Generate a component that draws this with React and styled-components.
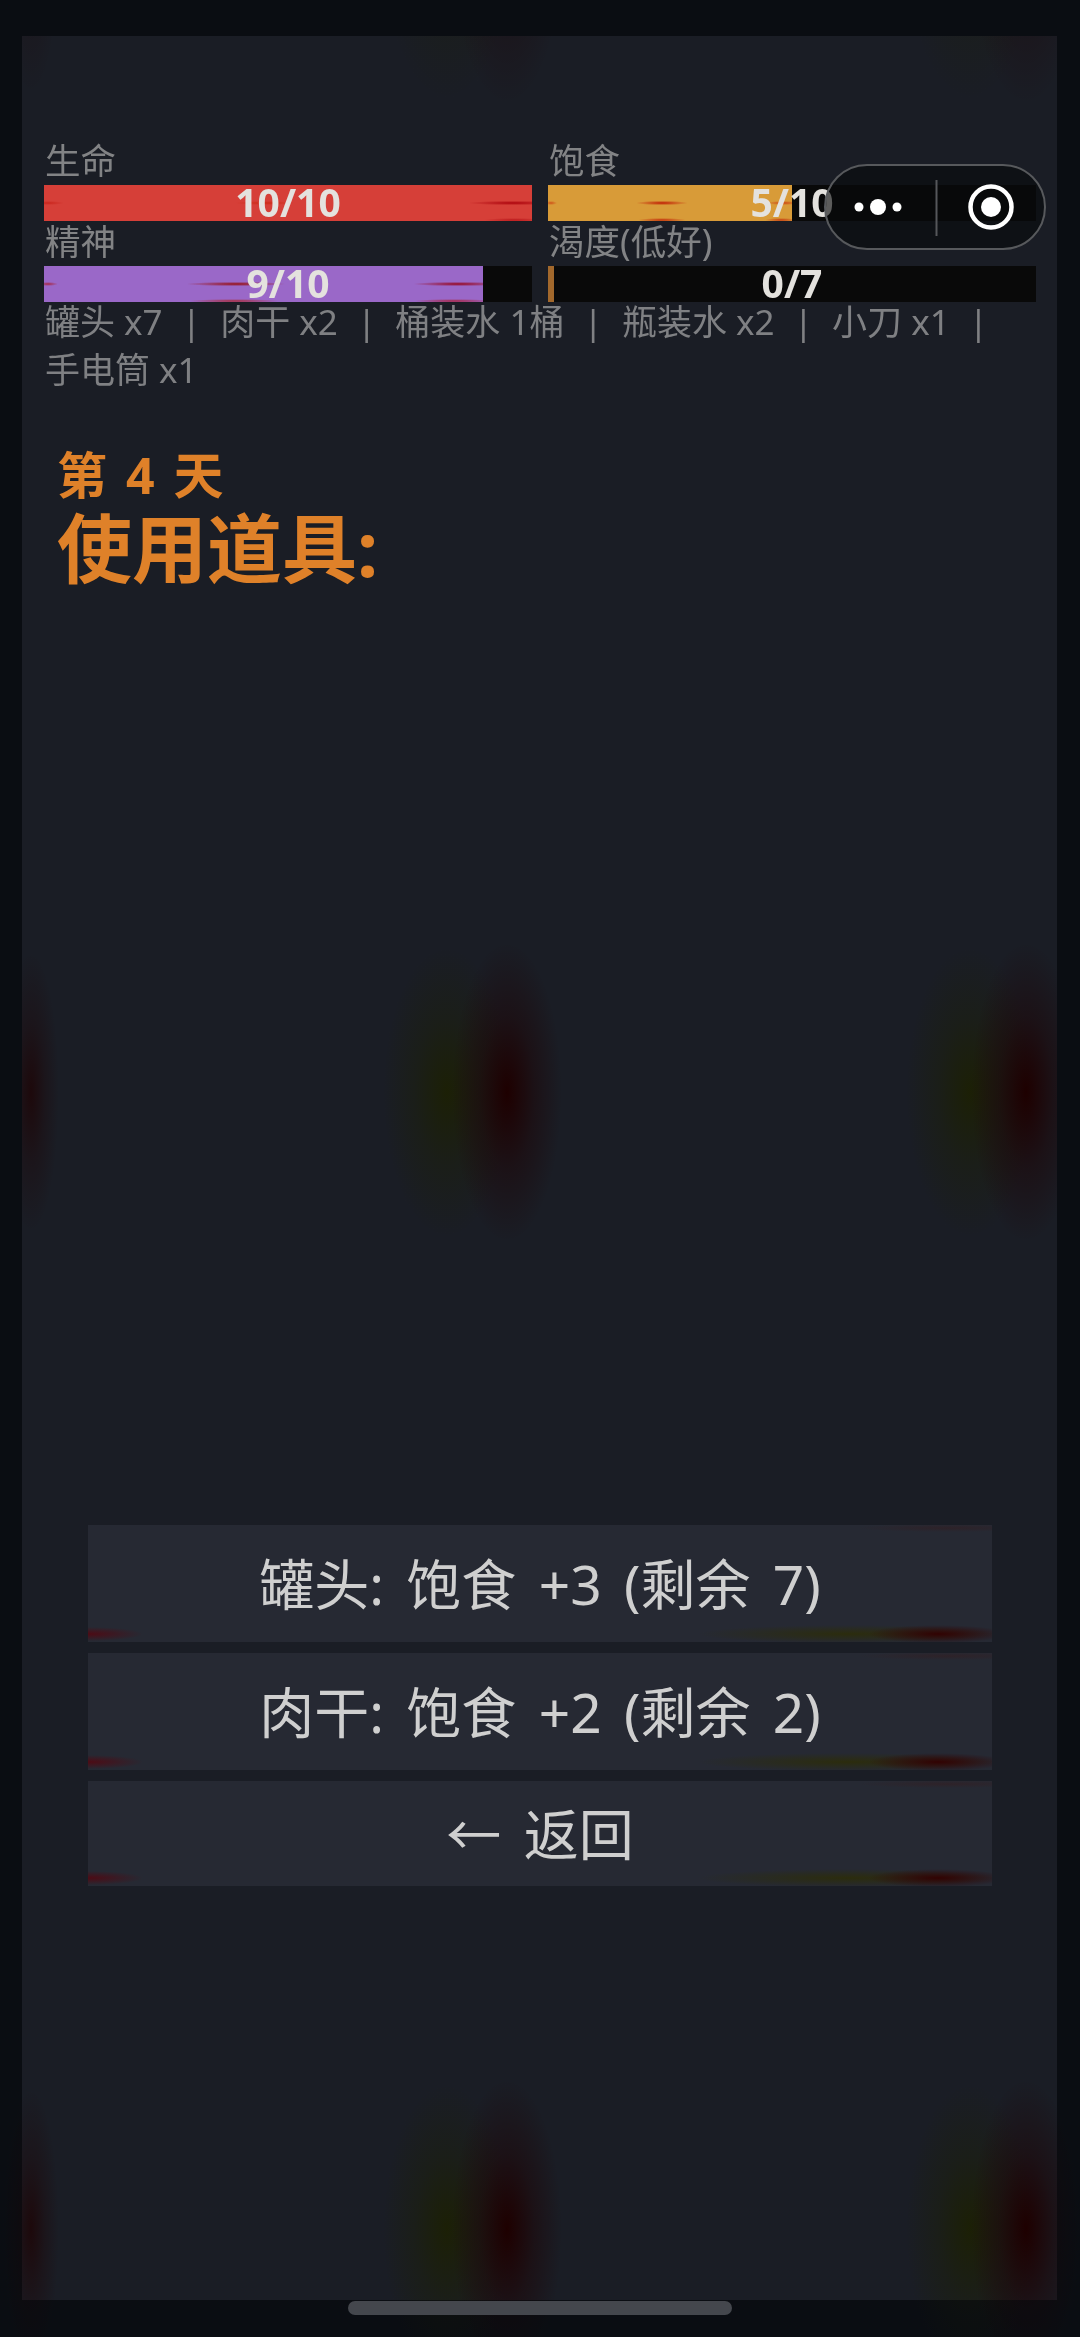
import React from "react";
import styled, { createGlobalStyle } from "styled-components";

const FONT = `"Noto Sans", "Noto Sans CJK SC", sans-serif`;

const blob = (x, y, rx, ry, rgb, a) =>
  `radial-gradient(ellipse ${rx}px ${ry}px at ${x}px ${y}px, rgba(${rgb},${a}) 0%, rgba(${rgb},${a * 0.4}) 50%, rgba(${rgb},0) 100%)`;

const blobRow = (ox, oy, a) =>
  [
    blob(485 + ox, oy, 55, 150, "30,0,0", a),
    blob(425 + ox, oy, 64, 145, "28,32,0", a * 0.85),
    blob(1004 + ox, oy, 55, 150, "30,0,0", a),
    blob(948 + ox, oy, 64, 145, "28,32,0", a * 0.85),
    blob(9 + ox, oy, 28, 140, "30,0,0", a * 0.7),
  ].join(",");

const Global = createGlobalStyle`
  html, body { margin: 0; padding: 0; background: #0a0d12; }
  body { font-family: ${FONT}; }
`;

const Screen = styled.div`
  position: relative;
  width: 1080px;
  height: 2337px;
  overflow: hidden;
  box-sizing: border-box;
  padding: 36px 23px 37px 22px;
  background: ${blobRow(22, 2229, 0.5)}, #0a0d12;
`;

const Panel = styled.main`
  height: 100%;
  box-sizing: border-box;
  padding: 104px 21px 0 22px;
  display: flex;
  flex-direction: column;
  background: ${blobRow(0, -81, 0.55)}, ${blobRow(0, 1056, 1)}, ${blobRow(0, 2193, 1)}, #1a1d25;
`;

const Stats = styled.section`
  display: grid;
  grid-template-columns: 488px 488px;
  column-gap: 16px;
`;

const Stat = styled.div`
  display: flex;
  flex-direction: column;
`;

const StatLabel = styled.div`
  height: 45px;
  padding-left: 1px;
  font-size: 35.5px;
  line-height: 40px;
  color: #828385;
  filter: blur(0.6px);
`;

const Bar = styled.div`
  display: grid;
  height: 36px;
  background: #090909;
`;

const BarFill = styled.div`
  grid-area: 1 / 1;
  height: 36px;
  background: ${(p) => p.$streaks}, ${(p) => p.$color};
`;

const BarValue = styled.div`
  grid-area: 1 / 1;
  text-align: center;
  font-size: 39px;
  font-weight: 700;
  line-height: 33px;
  color: #e4e2de;
  filter: blur(0.6px);
`;

const Inventory = styled.p`
  margin: -4px 0 0;
  padding-left: 1px;
  font-size: 35px;
  line-height: 48px;
  color: #7f8083;
  filter: blur(0.6px);
`;

const Sep = styled.span`
  margin: 0 10px;
`;

const Heading = styled.header`
  margin: 50px 0 0 13px;
  color: #df8129;
  font-weight: 700;
  filter: blur(0.5px);
`;

const Day = styled.div`
  font-size: 50px;
  line-height: 62px;
  word-spacing: 6px;
`;

const Title = styled.h1`
  margin: 0;
  font-size: 75px;
  line-height: 84px;
  font-weight: 700;
`;

const Actions = styled.nav`
  margin-top: auto;
  margin-bottom: 414px;
  margin-left: 44px;
  margin-right: 44px;
  display: flex;
  flex-direction: column;
  gap: 11.5px;
`;

const ActionButton = styled.button`
  display: flex;
  align-items: center;
  justify-content: center;
  height: ${(p) => (p.$short ? 105 : 116.5)}px;
  padding: 0 0 5px;
  border: 0;
  font-family: ${FONT};
  font-size: 55px;
  word-spacing: 8px;
  color: #cfcfcf;
  background:
    radial-gradient(ellipse 55px 7px at 0px calc(100% - 8px), rgba(90, 0, 10, 0.75), rgba(90, 0, 10, 0)),
    radial-gradient(ellipse 70px 9px at 850px calc(100% - 8px), rgba(50, 0, 0, 0.95), rgba(50, 0, 0, 0)),
    radial-gradient(ellipse 150px 9px at 760px calc(100% - 8px), rgba(45, 45, 0, 0.75), rgba(45, 45, 0, 0)),
    radial-gradient(ellipse 90px 4px at 860px 3px, rgba(60, 20, 20, 0.35), rgba(60, 20, 20, 0)),
    #262933;
`;

const ButtonLabel = styled.span`
  filter: blur(0.5px);
`;

const Capsule = styled.div`
  position: absolute;
  left: 824px;
  top: 164px;
  width: 222px;
  height: 86px;
  box-sizing: border-box;
  border: 2px solid #57595c;
  border-radius: 43px;
  background: rgba(8, 9, 11, 0.62);
  display: flex;
  align-items: center;
`;

const CapsuleIcon = styled.svg`
  display: block;
`;

const HomeBar = styled.div`
  position: absolute;
  left: 348px;
  top: 2301px;
  width: 384px;
  height: 14px;
  border-radius: 7px;
  background: #44474d;
`;

const streak = (x, y, rx, ry, rgb, a) =>
  `radial-gradient(ellipse ${rx}px ${ry}px at ${x}px ${y}px, rgba(${rgb},${a}), rgba(${rgb},0))`;

const stats = [
  { label: "生命", value: "10/10", pct: 100, color: "#d63f38",
    streaks: [streak(469, 18, 45, 2.2, "170,0,10", 0.95), streak(221, 18, 30, 2, "200,30,0", 0.6), streak(4, 18, 16, 2, "190,10,0", 0.5), streak(470, 35, 30, 2, "170,0,10", 0.6)].join(",") },
  { label: "饱食", value: "5/10", pct: 50, color: "#d89b38",
    streaks: [streak(114, 18, 26, 2.2, "190,20,0", 0.95), streak(114, 35, 24, 2, "190,20,0", 0.8), streak(235, 18, 16, 2, "200,30,0", 0.7), streak(233, 35, 16, 2, "190,20,0", 0.7), streak(3, 18, 6, 2, "200,30,0", 0.6)].join(",") },
  { label: "精神", value: "9/10", pct: 90, color: "#9a68c8",
    streaks: [streak(192, 18, 50, 2.2, "150,10,10", 0.95), streak(414, 18, 45, 2.2, "150,0,20", 0.95), streak(4, 18, 10, 2, "170,10,10", 0.7), streak(190, 35, 45, 2, "170,20,0", 0.7), streak(410, 35, 40, 2, "170,10,10", 0.7)].join(",") },
  { label: "渴度(低好)", value: "0/7", pct: 1.2, color: "#a2682c", streaks: "none" },
];

const items = ["罐头 x7", "肉干 x2", "桶装水 1桶", "瓶装水 x2", "小刀 x1", "手电筒 x1"];

export default function App() {
  return (
    <>
      <Global />
      <Screen>
        <Panel>
          <Stats>
            {stats.map((s) => (
              <Stat key={s.label}>
                <StatLabel>{s.label}</StatLabel>
                <Bar>
                  <BarFill $color={s.color} $streaks={s.streaks} style={{ width: `${s.pct}%` }} />
                  <BarValue>{s.value}</BarValue>
                </Bar>
              </Stat>
            ))}
          </Stats>
          <Inventory>
            {items.map((it, i) => (
              <React.Fragment key={it}>
                {it}
                {i < items.length - 1 ? (
                  <>
                    {" "}<Sep>|</Sep>{" "}
                  </>
                ) : null}
              </React.Fragment>
            ))}
          </Inventory>
          <Heading>
            <Day>第 4 天</Day>
            <Title>使用道具:</Title>
          </Heading>
          <Actions>
            <ActionButton><ButtonLabel>罐头: 饱食 +3 (剩余 7)</ButtonLabel></ActionButton>
            <ActionButton><ButtonLabel>肉干: 饱食 +2 (剩余 2)</ButtonLabel></ActionButton>
            <ActionButton $short><ButtonLabel>← 返回</ButtonLabel></ActionButton>
          </Actions>
        </Panel>
        <Capsule>
          <CapsuleIcon width="218" height="82" viewBox="0 0 218 82">
            <circle cx="33" cy="41" r="4.5" fill="#fff" />
            <circle cx="52" cy="41" r="8" fill="#fff" />
            <circle cx="71" cy="41" r="4.5" fill="#fff" />
            <rect x="109.5" y="14" width="2" height="56" fill="#55575a" />
            <circle cx="165" cy="41" r="20.5" fill="none" stroke="#fff" strokeWidth="4.5" />
            <circle cx="165" cy="41" r="10" fill="#fff" />
          </CapsuleIcon>
        </Capsule>
        <HomeBar />
      </Screen>
    </>
  );
}
